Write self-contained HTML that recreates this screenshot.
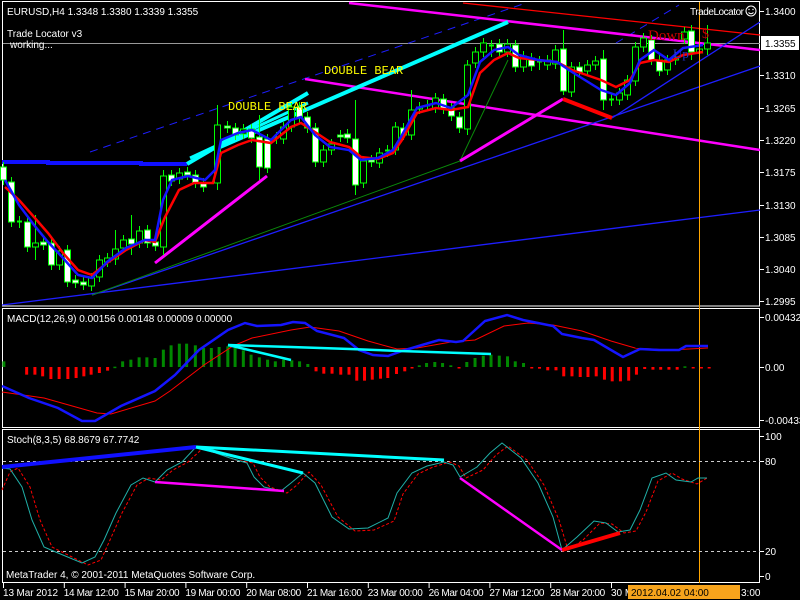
<!DOCTYPE html>
<html><head><meta charset="utf-8"><style>
body{margin:0;background:#000;width:800px;height:600px;overflow:hidden;font-family:"Liberation Sans",sans-serif}
svg{display:block}
text{font-family:"Liberation Sans",sans-serif;font-size:10px;fill:#fff}
.y{font-family:"Liberation Mono",monospace;font-size:12px;fill:#ff0}
</style></head><body>
<svg id="s" width="800" height="600" viewBox="0 0 800 600" xmlns="http://www.w3.org/2000/svg">
<rect width="800" height="600" fill="#000"/>
<g fill="none" stroke="#fff" stroke-width="1">
<rect x="2.5" y="1.5" width="757" height="304.5"/>
<rect x="2.5" y="308.5" width="757" height="119"/>
<rect x="2.5" y="429.5" width="757" height="153"/>
</g>
<line x1="3" y1="43.5" x2="760" y2="43.5" stroke="#999"/>
<!-- main chart lines -->
<g fill="none">
<line x1="90" y1="152" x2="523" y2="4" stroke="#1e1eff" stroke-dasharray="8,6"/>
<line x1="616" y1="43" x2="679" y2="5" stroke="#1e1eff" stroke-dasharray="8,6"/>
<line x1="349" y1="3" x2="760" y2="50" stroke="#f0f" stroke-width="2.5"/>
<line x1="463" y1="3" x2="760" y2="35" stroke="#f00" stroke-width="1.3"/>
<line x1="305" y1="79" x2="760" y2="150" stroke="#f0f" stroke-width="2.5"/>
<line x1="2" y1="305" x2="760" y2="210" stroke="#1e1eff" stroke-width="1.3"/>
<line x1="92" y1="295" x2="760" y2="66" stroke="#1e1eff" stroke-width="1.3"/>
<line x1="612" y1="118" x2="760" y2="22" stroke="#1e1eff" stroke-width="1.3"/>
<polyline points="92,295 460,161 508,60" stroke="#0a8a0a"/>
<polyline points="2,162 48,162 48,163 141,163 141,164 187,164" stroke="#1010ff" stroke-width="4"/>
<line x1="187" y1="164" x2="308" y2="93" stroke="#0ff" stroke-width="4"/>
<line x1="190" y1="158" x2="308" y2="103" stroke="#0ff" stroke-width="3"/>
<line x1="220" y1="147" x2="508" y2="22" stroke="#0ff" stroke-width="4"/>
<line x1="155" y1="263" x2="267" y2="176" stroke="#f0f" stroke-width="3"/>
<line x1="460" y1="161" x2="563" y2="99" stroke="#f0f" stroke-width="3"/>
<line x1="563" y1="99" x2="612" y2="118" stroke="#f00" stroke-width="4"/>
</g>
<g id="candles"></g>
<polyline fill="none" stroke="#f00" stroke-width="2.5" points="5,187 19,200 34,217 48,233 63,253 78,270 92,275 107,263 126,250 145,240 155,242 165,217 179,190 194,183 213,183 221,153 238,145 252,140 271,143 291,127 301,123 315,132 330,142 349,147 361,157 378,159 393,153 402,140 417,113 436,108 451,110 468,107 480,73 494,60 508,53 519,58 538,60 557,62 572,70 601,80 616,87 630,80 640,63 654,60 669,62 683,55 703,52"/>
<polyline fill="none" stroke="#1515ff" stroke-width="2.5" points="5,180 19,205 34,225 48,242 63,258 78,275 92,278 107,262 126,248 145,240 155,240 163,200 172,180 188,176 205,180 215,170 221,140 238,133 252,130 271,140 291,120 301,117 315,135 330,147 349,150 361,160 378,158 393,150 402,135 417,108 436,103 451,108 468,95 480,62 494,50 508,47 519,55 538,60 557,62 572,72 601,90 616,95 630,83 640,60 654,50 669,60 683,48 703,45"/>
<line x1="699.5" y1="2" x2="699.5" y2="583" stroke="#ffa500" stroke-width="1"/>
<text x="324" y="74" class="y">DOUBLE BEAR</text>
<text x="228" y="110" class="y">DOUBLE BEAR</text>
<text x="648" y="40" style="font-family:'Liberation Serif',serif;font-size:15px;fill:#c00">Down</text>
<text x="702" y="38" style="font-family:'Liberation Serif',serif;font-size:14px;fill:#c00">$</text>
<text x="673" y="58" style="font-family:'Liberation Serif',serif;font-size:13px;fill:#2233cc">Up</text>
<text x="690" y="15" style="font-size:10px" textLength="54">TradeLocator</text>
<circle cx="751" cy="11" r="5" fill="none" stroke="#fff"/>
<path d="M748.5 12.5 Q751 15 753.5 12.5" stroke="#fff" fill="none"/>
<circle cx="749" cy="9.5" r="0.7" fill="#fff"/><circle cx="753" cy="9.5" r="0.7" fill="#fff"/>
<text x="7" y="15">EURUSD,H4  1.3348 1.3380 1.3339 1.3355</text>
<text x="7" y="37">Trade Locator v3</text>
<text x="10" y="48">working...</text>
<!-- MACD -->
<g id="hist"></g>
<polyline fill="none" stroke="#f00" stroke-width="1" points="2,392 44,398 97,413 111,414 155,401 170,391 204,365 233,346 252,338 291,330 310,327 339,331 368,341 397,349 417,348 451,342 475,340 504,326 528,323 553,325 582,331 611,341 635,348 669,350 708,348"/>
<polyline fill="none" stroke="#1515ff" stroke-width="2.5" points="2,386 29,398 58,408 82,421 95,421 121,406 155,391 175,375 199,350 228,330 245,323 257,326 281,325 293,322 305,323 317,331 344,338 359,350 373,355 388,356 402,351 422,345 439,340 456,342 463,341 485,321 507,315 523,320 538,323 553,326 562,334 582,338 594,340 611,350 623,357 640,349 659,350 679,350 686,346 708,346"/>
<line x1="228" y1="345" x2="291" y2="360" stroke="#0ff" stroke-width="2.5"/>
<polyline fill="none" stroke="#0ff" stroke-width="2.5" points="228,345 291,347 350,349 400,351 491,354"/>
<text x="7" y="322">MACD(12,26,9) 0.00156 0.00148 0.00009 0.00000</text>
<!-- Stoch -->
<line x1="3" y1="461.5" x2="760" y2="461.5" stroke="#ccc" stroke-dasharray="3,3"/>
<line x1="3" y1="551.5" x2="760" y2="551.5" stroke="#ccc" stroke-dasharray="3,3"/>
<polyline fill="none" stroke="#f00" stroke-dasharray="3,2" points="2,490 10,472 18,468 30,487 40,520 52,547 64,553 88,565 101,560 110,540 122,513 137,485 149,478 161,480 173,470 188,462 202,449 219,454 236,460 253,463 260,477 270,487 287,493 297,485 309,472 321,485 338,517 355,531 374,530 394,521 403,494 418,474 433,467 450,462 459,466 466,478 483,470 496,455 508,446 527,460 544,485 559,520 568,550 583,540 600,523 612,524 624,533 636,531 646,512 658,481 672,473 682,479 697,484 707,478"/>
<polyline fill="none" stroke="#20b0a8" points="2,468 10,469 22,487 32,520 44,547 58,553 82,563 95,557 104,540 116,513 131,485 143,478 155,482 167,470 182,462 196,447 213,452 230,458 247,463 254,477 264,487 281,491 291,483 303,473 315,483 332,517 349,529 368,528 388,518 397,493 412,473 427,466 444,462 453,465 460,477 477,467 490,453 502,443 521,458 538,483 553,517 562,550 577,537 594,521 606,523 618,532 630,530 640,510 652,478 666,473 676,480 691,482 698,478 707,478"/>
<line x1="2" y1="467" x2="196" y2="447" stroke="#1010ff" stroke-width="4"/>
<line x1="196" y1="447" x2="444" y2="460" stroke="#0ff" stroke-width="3"/>
<line x1="196" y1="447" x2="303" y2="473" stroke="#0ff" stroke-width="3"/>
<line x1="155" y1="482" x2="284" y2="491" stroke="#f0f" stroke-width="2.5"/>
<line x1="460" y1="478" x2="562" y2="550" stroke="#f0f" stroke-width="2.5"/>
<line x1="562" y1="550" x2="620" y2="533" stroke="#f00" stroke-width="4"/>
<text x="7" y="443">Stoch(8,3,5) 68.8679 67.7742</text>
<text x="6" y="578">MetaTrader 4, © 2001-2011 MetaQuotes Software Corp.</text>
<!-- axes -->
<g id="ax" stroke="#fff"></g>
<rect x="761" y="36" width="38" height="14" fill="#fff"/>
<text x="765" y="47" style="fill:#000">1.3355</text>
<g id="axt"></g>
<rect x="628" y="585" width="112" height="14" fill="#f7a41c"/>
<text x="631" y="596" style="fill:#000">2012.04.02 04:00</text>
<text x="741" y="596">3:00</text>
</svg>
<script>
var NS="http://www.w3.org/2000/svg";
function el(p,t,a,txt){var e=document.createElementNS(NS,t);for(var k in a)e.setAttribute(k,a[k]);if(txt)e.textContent=txt;document.getElementById(p).appendChild(e);return e;}
var C=[[3,167,180,'w'],[11,182,222,'w'],[19,221,223,'d'],[27,222,247,'w'],[35,243,247,'h'],[43,242,245,'w'],[51,243,265,'w'],[59,251,265,'h'],[67,250,282,'w'],[75,280,283,'w'],[83,282,285,'w'],[91,278,286,'h'],[99,260,277,'h'],[107,258,262,'h'],[115,249,259,'h'],[123,240,248,'h'],[131,239,244,'w'],[139,231,243,'h'],[147,230,243,'w'],[155,242,246,'w'],[163,176,247,'h'],[171,175,181,'w'],[179,173,179,'h'],[187,172,175,'w'],[195,175,183,'w'],[203,183,187,'w'],[217,125,183,'h'],[227,126,128,'w'],[235,128,135,'w'],[243,129,134,'h'],[251,129,138,'w'],[259,137,167,'w'],[267,139,168,'w'],[276,137,139,'d'],[283,127,139,'h'],[291,107,127,'h'],[299,107,118,'w'],[307,117,128,'w'],[315,128,162,'w'],[323,150,162,'h'],[331,144,150,'h'],[340,135,137,'w'],[347,134,138,'w'],[355,139,185,'w'],[363,161,183,'h'],[371,160,162,'w'],[379,153,163,'h'],[387,150,152,'d'],[395,127,150,'h'],[403,128,135,'w'],[411,110,135,'h'],[419,107,109,'h'],[427,105,106,'d'],[435,98,108,'h'],[443,99,109,'w'],[451,108,116,'w'],[459,117,128,'w'],[467,65,129,'h'],[475,52,63,'h'],[483,43,52,'h'],[491,45,52,'d'],[499,44,52,'w'],[507,44,52,'h'],[515,45,67,'w'],[523,56,67,'h'],[531,58,66,'w'],[539,61,65,'d'],[547,60,65,'h'],[555,50,64,'h'],[563,49,91,'w'],[571,67,92,'h'],[579,67,72,'w'],[587,65,71,'h'],[595,61,65,'h'],[603,59,100,'w'],[611,99,101,'d'],[619,93,100,'h'],[627,80,95,'h'],[635,47,81,'h'],[643,38,47,'h'],[651,40,60,'w'],[659,60,71,'w'],[667,60,70,'h'],[675,57,60,'h'],[684,32,39,'h'],[691,31,52,'w'],[699,49,53,'h'],[707,43,49,'h']];
var long={217:[105,190],163:[170,255],355:[100,195],467:[60,135],563:[30,95],603:[50,110],35:[215,260],259:[115,180],411:[90,140],691:[25,60],707:[25,55],115:[230,265],131:[215,255]};
C.forEach(function(c){var x=c[0],t=c[1],b=c[2];var hi=t-5,lo=b+5;if(long[x]){hi=long[x][0];lo=long[x][1];}
el('candles','line',{x1:x+.5,y1:hi,x2:x+.5,y2:lo,stroke:'#0f0'});
if(c[3]=='d'){el('candles','line',{x1:x-2,y1:t+.5,x2:x+3,y2:t+.5,stroke:'#0f0','stroke-width':2});}
else el('candles','rect',{x:x-2.5,y:t,width:6,height:Math.max(2,b-t),fill:c[3]=='w'?'#fff':'#000',stroke:'#0f0'});});
var H=[[55,200],[72,200],[88,205],[105,213],[122,213],[140,213],[157,210],[173,205],[188,200],[205,195],[222,188],[8,160],[237,176],[253,160],[270,155],[287,148],[303,148],[320,150],[337,125],[353,112],[370,107],[385,107],[403,112],[420,120],[436,120],[452,117],[470,115],[485,120],[502,127],[518,140],[535,148],[552,155],[568,160],[585,155],[602,157],[618,160],[635,168],[652,190],[668,197],[685,197],[703,200],[720,200],[736,218],[752,218],[768,215],[785,212],[800,210],[818,198],[835,190],[850,178],[865,172],[880,165],[897,162],[913,165],[930,172],[947,180],[963,162],[980,150],[997,143],[1013,140],[1030,143],[1047,145],[1063,160],[1080,165],[1097,178],[1113,182],[1130,187],[1147,187],[1163,205],[1180,205],[1197,207],[1213,207],[1230,205],[1247,215],[1263,220],[1280,220],[1297,218],[1313,200],[1330,183],[1347,185],[1363,185],[1380,185],[1397,185],[1413,175],[1430,178],[1447,178],[1463,178]];
var z=367;H.forEach(function(h){var x=h[0]/2.063,y=308+h[1]/3;var col=y<z?'#008800':'#ff0000';var t=Math.min(y,z),hh=Math.max(1.5,Math.abs(y-z));
el('hist','rect',{x:x-1.5,y:t,width:3,height:hh,fill:col});});
var P=[[11,'1.3400'],[75,'1.3310'],[108,'1.3265'],[140,'1.3220'],[172,'1.3175'],[205,'1.3130'],[237,'1.3085'],[269,'1.3040'],[301,'1.2995'],[317,'0.00432'],[367,'0.00'],[420,'-0.00433'],[436,'100'],[461,'80'],[551,'20'],[576,'0']];
P.forEach(function(p){el('ax','line',{x1:760,y1:p[0]+.5,x2:764,y2:p[0]+.5});var t=el('axt','text',{x:765,y:p[0]+4},p[1]);});
var L=['13 Mar 2012','14 Mar 12:00','15 Mar 20:00','19 Mar 00:00','20 Mar 08:00','21 Mar 16:00','23 Mar 00:00','26 Mar 04:00','27 Mar 12:00','28 Mar 20:00','30 M'];
L.forEach(function(l,i){var x=3+i*60.8;el('ax','line',{x1:x+.5,y1:583,x2:x+.5,y2:588});var a={x:x,y:596};if(i<10)a.textLength=55;el('axt','text',a,l);});
</script>
</body></html>
